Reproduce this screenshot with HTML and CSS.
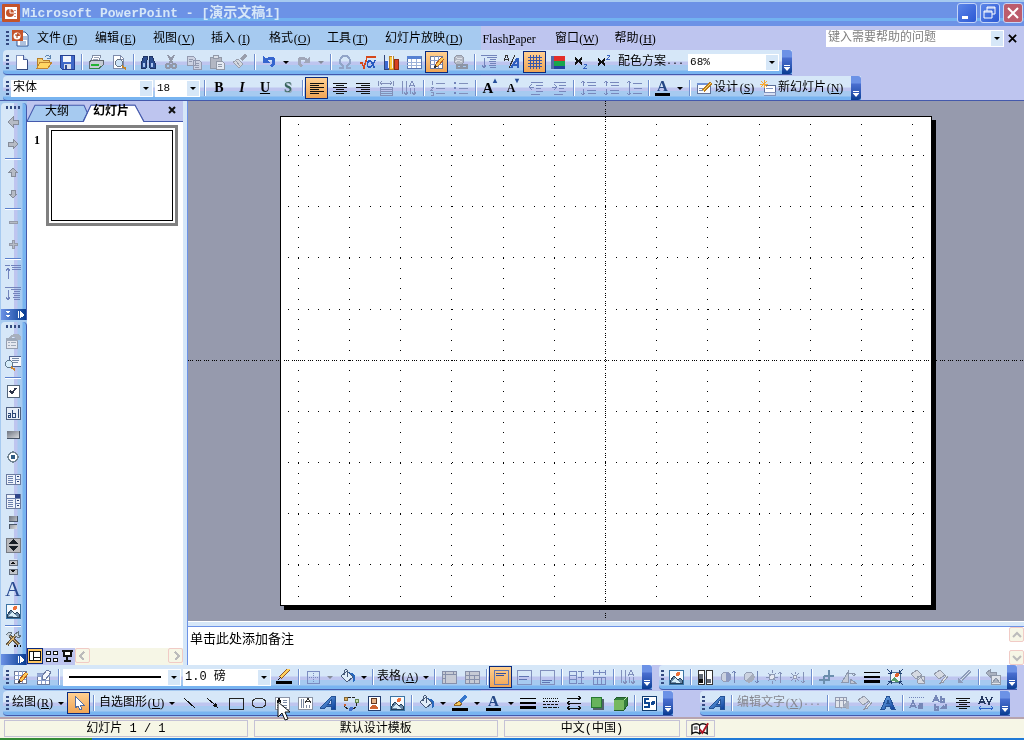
FILE: index.html
```html
<!DOCTYPE html>
<html lang="zh-CN">
<head>
<meta charset="utf-8">
<title>Microsoft PowerPoint - [演示文稿1]</title>
<link rel="stylesheet" href="styles.css">
</head>
<body>
<svg class="sprite" aria-hidden="true">
<defs>
<linearGradient id="blueA" x1="0" y1="0" x2="1" y2="1"><stop offset="0" stop-color="#7ab4ee"/><stop offset="1" stop-color="#0b3f9c"/></linearGradient>
<linearGradient id="metal" x1="0" y1="0" x2="1" y2="1"><stop offset="0" stop-color="#6d7480"/><stop offset="1" stop-color="#d8dade"/></linearGradient>
</defs>
<symbol id="ppt" viewBox="0 0 18 18"><rect width="18" height="18" rx="1" fill="#c4532a"/><rect x="3" y="3" width="12" height="12" fill="#fff"/><circle cx="8" cy="9" r="4" fill="#c4532a"/><path d="M8 5v4h4" stroke="#fff" fill="none"/><path d="M13 6v1M13 9v1M13 12v1" stroke="#822"/></symbol>
<symbol id="pptdoc" viewBox="0 0 18 18"><path d="M6 3h8l3 3v11H6z" fill="#fff" stroke="#345896"/><path d="M12 8h4M12 10h4M9 13h6M9 15h6" stroke="#5c83bd"/><rect x="1" y="1" width="11" height="11" fill="#c4532a"/><circle cx="6" cy="7" r="3.500" fill="#fff"/><path d="M6 7V4a3 3 0 0 1 3 3z" fill="#c4532a"/><path d="M4 6h2v3" stroke="#943711" fill="none"/></symbol>
<symbol id="new" viewBox="0 0 16 16"><path d="M3 1h7l4 4v10H3z" fill="#fff" stroke="#7d91bd"/><path d="M10 1v4h4" fill="#bcd0ef" stroke="#4a5f9c"/><path d="M4 15h10V6" stroke="#344b80" fill="none"/></symbol>
<symbol id="open" viewBox="0 0 16 16"><path d="M1 14V4h5l1 2h6v3" fill="#f4cf6b" stroke="#b47d2b"/><path d="M1 14 4 8h12l-4 6z" fill="#ffd664" stroke="#c08532"/><path d="M9 3q3-3 5 0m0-2v3h-3" fill="none" stroke="#5c83b0"/></symbol>
<symbol id="save" viewBox="0 0 16 16"><path d="M1 1h14v14H3l-2-2z" fill="#4068c8" stroke="#263f91"/><path d="M4 2h8v6H4z" fill="#f2f5fc"/><path d="M5 10h7v5H5z" fill="#d9deea"/><path d="M6 11h2v4H6z" fill="#304b96"/></symbol>
<symbol id="print" viewBox="0 0 16 16"><path d="M5 1h8l-2 6H3z" fill="#fff" stroke="#7f8ba3"/><path d="M6 3h5M5 5h5" stroke="#9aa3b6"/><path d="m1 8 3-2h11v5l-3 3H1z" fill="#c6ccd5" stroke="#5e6772"/><path d="M3 11h8" stroke="#22b432" stroke-width="2"/><path d="M2 14h9l2-2" fill="none" stroke="#2c8b45"/></symbol>
<symbol id="preview" viewBox="0 0 16 16"><path d="M2 1h7l3 3v10H2z" fill="#fff" stroke="#7e8baa"/><path d="M9 1v4h3" fill="none" stroke="#7e8baa"/><circle cx="8" cy="9" r="3.500" fill="#cce3f8" stroke="#687585"/><path d="m11 12 4 3" stroke="#c58628" stroke-width="2"/></symbol>
<symbol id="find" viewBox="0 0 16 16"><path d="M4 2h3v4l-1 8H1V9zM9 2h3l3 7v5h-5L9 6z" fill="#2c4d91" stroke="#1d3365"/><path d="M3 9h2v4H3M11 9h2v4h-2M7 6h2v3H7z" fill="#a7c4f2"/></symbol>
<symbol id="cut" viewBox="0 0 16 16"><path d="m5 1 5 9M11 1 6 10" stroke="#9298a9" stroke-width="2"/><circle cx="5" cy="12" r="2" fill="none" stroke="#9298a9" stroke-width="2"/><circle cx="11" cy="12" r="2" fill="none" stroke="#9298a9" stroke-width="2"/></symbol>
<symbol id="copy" viewBox="0 0 16 16"><path d="M1 2h6l2 2v7H1zM7 6h6l2 2v7H7z" fill="#ccd2e2" stroke="#9299af"/><path d="M3 5h4M3 7h3M9 9h4M9 11h4M9 13h4" stroke="#9299af"/></symbol>
<symbol id="paste" viewBox="0 0 16 16"><path d="M1 3h11v11H1z" fill="#b3b7c3" stroke="#9299a8"/><path d="M4 1h5v3H4z" fill="#dce0e8" stroke="#9299a8"/><path d="M7 7h6l2 2v6H7z" fill="#e5eaf3" stroke="#9299a8"/><path d="M9 10h4M9 12h4" stroke="#9299a8"/></symbol>
<symbol id="brush" viewBox="0 0 16 16"><path d="m14 1-5 5" stroke="#999eac" stroke-width="3"/><path d="m6 5 5 5-4 4-6-6z" fill="#d4d8e0" stroke="#999eac"/><path d="m4 7 4 5" stroke="#999eac"/></symbol>
<symbol id="undo" viewBox="0 0 16 16"><path d="M5 6q7-4 8 1 0 3-3 6" fill="none" stroke="#3565cf" stroke-width="3"/><path d="M2 2v7h7z" fill="#3565cf"/></symbol>
<symbol id="redo" viewBox="0 0 16 16"><path d="M11 6Q4 2 3 7q0 3 3 6" fill="none" stroke="#a1a7b9" stroke-width="3"/><path d="M14 2v7H7z" fill="#a1a7b9"/></symbol>
<symbol id="omega" viewBox="0 0 16 16"><path d="M2 14h4v-2Q2 9 3 6q1-4 5-4t5 4q1 3-3 6v2h4" fill="none" stroke="#91a4c8" stroke-width="2"/></symbol>
<symbol id="root" viewBox="0 0 16 16"><path d="M0 9h2l2 5L7 3h9" fill="none" stroke="#d5471b" stroke-width="1.500"/><path d="M15 6q-3 8-6 7-3-1-1-5 2-3 4 1l2 4h1" fill="none" stroke="#2959bf" stroke-width="1.500"/></symbol>
<symbol id="chart" viewBox="0 0 16 16"><path d="M1 1v14h14" stroke="#33457b" fill="none"/><path d="M2 7h4v8H2z" fill="#3e69d2"/><path d="M6 2h4v13H6z" fill="#ffca3e" stroke="#b7832a"/><path d="M11 5h4v10h-4z" fill="#d94120" stroke="#8a2d18"/><path d="M3 6h2v8M7 1h2v13" fill="none" stroke="#eef"/></symbol>
<symbol id="table" viewBox="0 0 16 16"><path d="M1 2h14v12H1z" fill="#fff" stroke="#5875b2"/><path d="M1 2h14v3H1z" fill="#5681d2"/><path d="M5 5v9M10 5v9M1 8h14M1 11h14" stroke="#9db2d9"/></symbol>
<symbol id="tablepen" viewBox="0 0 16 16"><path d="M1 2h12v12H1z" fill="#fff" stroke="#6b7899"/><path d="M5 2v12M9 2v12M1 6h12M1 10h12" stroke="#8a9ecb"/><path d="m7 12 7-8" stroke="#b75e20" stroke-width="4"/><path d="m7 12 7-8" stroke="#ffca55" stroke-width="2"/><path d="m5 14 1-3 2 2z" fill="#333"/></symbol>
<symbol id="eraser" viewBox="0 0 16 16"><path d="M1 4h12v11H1z" fill="#fff" stroke="#6b7899"/><path d="M1 4h12v3H1M5 7v8M9 7v8M1 11h12" stroke="#8a9ecb" fill="#97abd6"/><path d="m6 7 5-6 4 2-5 7H6z" fill="#f4f7fc" stroke="#6b7ba3"/></symbol>
<symbol id="link" viewBox="0 0 16 16"><circle cx="7" cy="6" r="5" fill="#b3b9c5" stroke="#9499a6"/><path d="M4 3q3 3 6 1M3 8q3-3 7 0" stroke="#dce0e7" fill="none"/><path d="M5 11h4v3H5zM10 11h5v3h-5z" fill="none" stroke="#8d95a5" stroke-width="2"/></symbol>
<symbol id="expand" viewBox="0 0 16 16"><path d="M0 1h16M6 3h10M9 5h6M8 7h7M9 9h6M8 11h7M9 13h6M3 4v10M1 11l2 3 2-3" fill="none" stroke="#7284bb"/></symbol>
<symbol id="collapse" viewBox="0 0 16 16"><path d="M0 1h5M6 1h10M7 3h9M7 5h9M3 15V4M1 7l2-3 2 3" fill="none" stroke="#7183bd"/></symbol>
<symbol id="fmt" viewBox="0 0 16 16"><path d="M0 7 2 1h1l2 6M1 5h3M5 14 11 1" stroke="#333" fill="none"/><path d="m7 14 6-9h1v9M10 11h4" stroke="#2e5dbd" fill="none" stroke-width="2"/></symbol>
<symbol id="grid" viewBox="0 0 16 16"><path d="M3 1v14M6 1v14M9 1v14M12 1v14M1 3h14M1 6h14M1 9h14M1 12h14" stroke="#3656a9"/></symbol>
<symbol id="color" viewBox="0 0 16 16"><path d="M1 2h14v13H1z" fill="#23419f"/><path d="M2 2h13v5H2z" fill="#e32e29"/><path d="M2 7h13v5H2z" fill="#18a54c"/><path d="M1 2h3v13H1z" fill="#536aa7"/></symbol>
<symbol id="subx" viewBox="0 0 16 16"><path d="m2 4 7 6M9 4l-7 6" stroke="#111" stroke-width="2"/><path d="M11 10h2v2l-2 2h3" fill="none" stroke="#3863c0"/></symbol>
<symbol id="supx" viewBox="0 0 16 16"><path d="m2 5 7 6M9 5l-7 6" stroke="#111" stroke-width="2"/><path d="M11 1h2v2l-2 2h3" fill="none" stroke="#3863c0"/></symbol>
<symbol id="left" viewBox="0 0 16 16"><path d="M1 3h14M1 5h9M1 7h14M1 9h9M1 11h14M1 13h9" stroke="#111"/></symbol>
<symbol id="center" viewBox="0 0 16 16"><path d="M1 3h14M4 5h8M1 7h14M4 9h8M1 11h14M4 13h8" stroke="#111"/></symbol>
<symbol id="right" viewBox="0 0 16 16"><path d="M1 3h14M6 5h9M1 7h14M6 9h9M1 11h14M6 13h9" stroke="#111"/></symbol>
<symbol id="dist" viewBox="0 0 16 16"><path d="M0 1v5M15 1v5M2 3h12M4 1 2 3l2 2M12 1l2 2-2 2M2 7h12M2 9h12M2 11h12M2 13h12M2 7v8h12V7" stroke="#8290b8" fill="none"/></symbol>
<symbol id="vert" viewBox="0 0 16 16"><path d="M1 1v13M5 1v13M9 8v6M13 8v6M3 12l2 3 2-3M8 7l3-6 3 6M9 5h4M11 12l2 3 2-3" stroke="#8190bc" fill="none"/></symbol>
<symbol id="num" viewBox="0 0 16 16"><path d="M6 3h9M6 8h9M6 13h9M2 1v4M1 7h2v1L1 10h2M1 12h2v3H1" stroke="#8190bc" fill="none"/></symbol>
<symbol id="bul" viewBox="0 0 16 16"><path d="M6 3h9M6 8h9M6 13h9" stroke="#8190bc"/><path d="M1 2h2v2H1zM1 7h2v2H1zM1 12h2v2H1z" fill="#7385bb"/></symbol>
<symbol id="outdent" viewBox="0 0 16 16"><path d="M3 2h12M8 5h7M8 8h5M8 11h7M3 14h9M1 7h5M4 4 1 7l3 3" stroke="#7888bc" fill="none"/></symbol>
<symbol id="indent" viewBox="0 0 16 16"><path d="M3 2h12M8 5h7M8 8h5M8 11h7M3 14h9M1 7h5M3 4l3 3-3 3" stroke="#7888bc" fill="none"/></symbol>
<symbol id="space" viewBox="0 0 16 16"><path d="M7 2h9M8 5h8M7 10h9M8 13h8M3 1v5M1 3l2-2 2 2M3 9v6M1 13l2 2 2-2" stroke="#7888bc" fill="none"/></symbol>
<symbol id="space2" viewBox="0 0 16 16"><path d="M7 3h9M8 8h8M7 13h9M3 1v14M1 3l2-2 2 2M1 13l2 2 2-2" stroke="#7888bc" fill="none"/></symbol>
<symbol id="design" viewBox="0 0 16 16"><path d="M1 3h13v10H1z" fill="#f7faff" stroke="#62739a"/><path d="M1 3h13v2H1z" fill="#6f91d2"/><path d="M3 8h5M3 10h4" stroke="#7d8cad"/><path d="m7 11 8-8" stroke="#bb7a1d" stroke-width="3"/><path d="m7 11 8-8" stroke="#ffe06a"/></symbol>
<symbol id="newslide" viewBox="0 0 16 16"><path d="M4 5h11v10H4z" fill="#fff" stroke="#5c6e98"/><path d="M4 12h11v3H4M6 8h7" stroke="#8393bc" fill="#d5dff4"/><path d="M4 0v8M0 4h8M1 1l6 6M7 1 1 7" stroke="#f7a832"/></symbol>
<symbol id="al" viewBox="0 0 16 16"><path d="m3 8 5-5v3h5v4H8v3z" fill="#b6bbc5" stroke="#858c99"/></symbol>
<symbol id="ar" viewBox="0 0 16 16"><path d="M13 8 8 3v3H3v4h5v3z" fill="#b6bbc5" stroke="#858c99"/></symbol>
<symbol id="au" viewBox="0 0 16 16"><path d="m8 4-4 4h2v4h4V8h2z" fill="#b6bbc5" stroke="#858c99"/></symbol>
<symbol id="ad" viewBox="0 0 16 16"><path d="m8 12 4-4h-2V4H6v4H4z" fill="#b6bbc5" stroke="#858c99"/></symbol>
<symbol id="minus" viewBox="0 0 16 16"><path d="M4 7h8v2H4z" fill="#b6bbc5" stroke="#959ba9"/></symbol>
<symbol id="plus" viewBox="0 0 16 16"><path d="M7 4h2v3h3v2H9v3H7V9H4V7h3z" fill="#b6bbc5" stroke="#959ba9"/></symbol>
<symbol id="prop" viewBox="0 0 16 16"><path d="M1 5h11v10H1z" fill="#e5e8ef" stroke="#959eaf"/><path d="M1 5h11v2H1zM3 9h2M6 9h5M3 12h2M6 12h5" fill="#9faaba" stroke="#9faaba"/><path d="M4 5q3-5 9-4l3 3v3h-3L9 4z" fill="#a8b0bd"/></symbol>
<symbol id="code" viewBox="0 0 16 16"><path d="M4 1h12v10H4z" fill="#f4f7fd" stroke="#506491"/><path d="M7 3h7M7 5h7M8 7h5" stroke="#7589a6"/><circle cx="4" cy="9" r="3.500" fill="#d6edfa" stroke="#5f788d"/><path d="m6 12 4 3" stroke="#cb8530" stroke-width="2"/></symbol>
<symbol id="check" viewBox="0 0 16 16"><path d="M2 2h12v12H2z" fill="#fff" stroke="#54657a"/><path d="m5 8 2 2 4-5" fill="none" stroke="#2c3247" stroke-width="2"/></symbol>
<symbol id="text" viewBox="0 0 16 16"><path d="M1 2h14v12H1z" fill="#e8eff8" stroke="#506180"/><path d="M3 8h2v4H3v-2h2M7 5v7h3V8H7M13 4v9" fill="none" stroke="#2e4978"/></symbol>
<symbol id="cmd" viewBox="0 0 16 16"><path d="M2 4h12v7H2z" fill="url(#metal)"/><path d="M2 11h12V4" fill="none" stroke="#465366"/></symbol>
<symbol id="radio" viewBox="0 0 16 16"><circle cx="8" cy="8" r="5" fill="#fff" stroke="#718493" stroke-width="1.500"/><circle cx="8" cy="8" r="2.500" fill="#315b82"/></symbol>
<symbol id="listbox" viewBox="0 0 16 16"><path d="M1 3h14v10H1z" fill="#eef3fb" stroke="#6b7ba0"/><path d="M10 3v10M10 8h5M3 5h5M3 7h5M3 9h5M3 11h5" stroke="#6c81ad"/><path d="m11 6 2-2 1 2zM11 10h3l-1 2z" fill="#263d74"/></symbol>
<symbol id="combo" viewBox="0 0 16 16"><path d="M1 1h14v14H1z" fill="#eef3fb" stroke="#6b7ba0"/><path d="M10 1h5v4h-5z" fill="#2f4587"/><path d="M1 5h14M10 5v10M10 10h5M3 7h5M3 9h5M3 11h5M3 13h5" stroke="#6c81ad"/><path d="m11 8 2-2 1 2zM11 12h3l-1 2z" fill="#263d74"/></symbol>
<symbol id="toggle" viewBox="0 0 16 16"><path d="M4 1h8v5H4zM4 9h8v5H4z" fill="url(#metal)"/><path d="M12 1v5H4M4 14V9h8" fill="none" stroke="#485668"/></symbol>
<symbol id="spin" viewBox="0 0 16 16"><path d="M1 1h14v14H1z" fill="#b9b9bc" stroke="#777b84"/><path d="M3 7h10L8 2zM3 9h10l-5 5z" fill="#161d26"/></symbol>
<symbol id="scroll" viewBox="0 0 16 16"><path d="M4 0h8v16H4z" fill="#dce8f5"/><path d="M4 1h8v5H4zM4 10h8v5H4z" fill="#c1c4ca" stroke="#657080"/><path d="m6 5 2-3 2 3zM6 11h4l-2 3z" fill="#111"/></symbol>
<symbol id="image" viewBox="0 0 16 16"><path d="M1 1h14v14H1z" fill="#f6fbff" stroke="#3b74a4"/><circle cx="10" cy="5" r="2" fill="#ed7039"/><path d="m2 12 4-5 4 4 2-2 2 2v3H2z" fill="#6b8ba8" stroke="#243e59"/><path d="m3 13 4-4 5 5z" fill="#d6ecf7"/></symbol>
<symbol id="tools" viewBox="0 0 16 16"><path d="m2 14 9-10M5 5l9 9" stroke="#615746" stroke-width="3"/><path d="m2 14 9-10M5 5l9 9" stroke="#e2b670"/><path d="M1 4q3-4 6-2L4 6M10 3l3-2v3h3l-2 3-4-2" fill="#c8d0d8" stroke="#60707c"/><path d="M9 15h2M12 15h1M15 15h1" stroke="#111" stroke-width="2"/></symbol>
<symbol id="ink" viewBox="0 0 16 16"><path d="m4 9 9-9" stroke="#925829" stroke-width="4"/><path d="m4 9 9-9" stroke="#ffd05c" stroke-width="2"/><path d="m2 11 3-2-1-1z" fill="#222"/><path d="M0 12h16v3H0z" fill="#000"/></symbol>
<symbol id="border" viewBox="0 0 16 16"><path d="M2 2h12v12H2z" fill="none" stroke="#7b8cc0"/><path d="M8 2v12M2 8h12" stroke="#7b8cc0" stroke-dasharray="1 1"/></symbol>
<symbol id="bucket" viewBox="0 0 16 16"><path d="m2 7 6-5 6 6-6 5z" fill="#e0edf9" stroke="#485c7b"/><path d="M8 8V1q0-2-3 1v4" fill="none" stroke="#475a79"/><path d="m9 3 5 4v6l2-2V7l-3-3z" fill="#2867bd"/></symbol>
<symbol id="merge" viewBox="0 0 16 16"><path d="M1 2h14v12H1zM1 5h14M4 2v12M1 9h3M12 2v3" fill="#c7cbd5" stroke="#8790aa"/></symbol>
<symbol id="split" viewBox="0 0 16 16"><path d="M1 2h14v12H1zM1 6h14M1 10h14M5 2v12M10 6v8" fill="#c7cbd5" stroke="#8790aa"/></symbol>
<symbol id="vt" viewBox="0 0 16 16"><path d="M1 1h14v14H1z" fill="none" stroke="#6278b5"/><path d="M3 4h10M3 6h8" stroke="#354f9e"/></symbol>
<symbol id="vm" viewBox="0 0 16 16"><path d="M1 1h14v14H1z" fill="none" stroke="#8290bd"/><path d="M3 7h10M3 10h8" stroke="#6075b3"/></symbol>
<symbol id="vb" viewBox="0 0 16 16"><path d="M1 1h14v14H1z" fill="none" stroke="#8290bd"/><path d="M3 11h10M3 13h8" stroke="#6075b3"/></symbol>
<symbol id="rows" viewBox="0 0 16 16"><path d="M1 2h7v12H1zM1 6h7M1 10h7M10 2h6M10 8h6M10 14h6M13 2v12" fill="none" stroke="#7789be"/></symbol>
<symbol id="cols" viewBox="0 0 16 16"><path d="M2 8h12v7H2zM6 8v7M10 8v7M2 1v5M14 1v5M2 3h12M8 1v5" fill="none" stroke="#7789be"/></symbol>
<symbol id="shade" viewBox="0 0 16 16"><path d="M1 1h6v14H1zM9 1h6v14H9z" fill="#fff" stroke="#333"/><path d="M2 5h4v5H2zM10 10h4v4h-4z" fill="#606773"/><path d="M2 10h4v4H2z" fill="#111"/></symbol>
<symbol id="contrastup" viewBox="0 0 16 16"><circle cx="6" cy="8" r="5" fill="#cbd2e0" stroke="#949eb5"/><path d="M6 3a5 5 0 0 1 0 10z" fill="#8c9ac2"/><path d="M14 14V2M12 4l2-2 2 2" fill="none" stroke="#7184b6"/></symbol>
<symbol id="contrastdown" viewBox="0 0 16 16"><circle cx="6" cy="8" r="5" fill="#cbd2e0" stroke="#949eb5"/><path d="m2 12 8-8a5 5 0 0 1-8 8z" fill="#a6adbc"/><path d="M14 2v12M12 12l2 2 2-2" fill="none" stroke="#7184b6"/></symbol>
<symbol id="sunup" viewBox="0 0 16 16"><circle cx="6" cy="8" r="2.500" fill="#e5e9f3" stroke="#929db3"/><path d="M6 1v3M6 12v3M0 8h3M9 8h3M2 4l2 2M10 4 8 6M2 12l2-2M8 10l2 2M14 14V3M12 5l2-2 2 2" fill="none" stroke="#8492b8"/></symbol>
<symbol id="sundown" viewBox="0 0 16 16"><circle cx="6" cy="8" r="2" fill="#e5e9f3" stroke="#929db3"/><path d="M6 3v2M6 11v2M1 8h2M9 8h2M2 4l2 2M10 4 8 6M2 12l2-2M8 10l2 2M14 3v11M12 12l2 2 2-2" fill="none" stroke="#8492b8"/></symbol>
<symbol id="crop" viewBox="0 0 16 16"><path d="M6 7v8M1 11h10V1M11 7h5M6 7h5" fill="none" stroke="#6c8fae" stroke-width="1.500"/></symbol>
<symbol id="rotate" viewBox="0 0 16 16"><path d="M1 13h6V3zM9 10v4h6z" fill="#c4cad6" stroke="#8c98ae"/><path d="M8 4h5v3M11 5l2 2 2-2" fill="none" stroke="#8c98ae"/></symbol>
<symbol id="lines" viewBox="0 0 16 16"><path d="M0 3h16v1H0zM0 7h16v2H0zM0 11h16v3H0z" fill="#000"/></symbol>
<symbol id="compress" viewBox="0 0 16 16"><path d="M3 3h10v10H3z" fill="#eef6fb" stroke="#4c708f"/><circle cx="10" cy="6" r="2" fill="#df622a"/><path d="m3 12 4-4 6 5" fill="#5ca06d"/><path d="m0 0 4 4M16 0l-4 4M0 16l4-4M16 16l-4-4M4 1v3H1M12 1v3h3M4 15v-3H1M12 15v-3h3" stroke="#203e72" fill="none"/></symbol>
<symbol id="fillgray" viewBox="0 0 16 16"><path d="m1 5 6-4 5 5-6 4zM7 7h7v7H8z" fill="#d6dae2" stroke="#939bab"/><path d="m8 11 3-3 4 7" fill="none" stroke="#929aaa"/></symbol>
<symbol id="fillbrush" viewBox="0 0 16 16"><path d="m1 5 6-4 5 5-6 4z" fill="#d6dae2" stroke="#939bab"/><path d="m14 7-5 6" stroke="#939bab" stroke-width="3"/><path d="m14 7-5 6" stroke="#dfe3ea"/><path d="m6 15 2-3 2 2z" fill="#8d95a6"/></symbol>
<symbol id="wand" viewBox="0 0 16 16"><path d="m14 2-9 9" stroke="#8d9dba" stroke-width="3"/><path d="m14 2-9 9" stroke="#dbe4ef"/><path d="M2 9v5h5z" fill="#8c9cbb"/></symbol>
<symbol id="reset" viewBox="0 0 16 16"><path d="M6 6h9v9H6z" fill="#dfe3ea" stroke="#929baa"/><path d="m7 14 4-5 4 5M1 4l4-3v2h6v3H5v2z" fill="#aab2c0" stroke="#8b95a7"/></symbol>
<symbol id="pointer" viewBox="0 0 16 16"><path d="M4 1v12l3-2 2 4 2-1-2-4h4z" fill="#fff" stroke="#536da1"/></symbol>
<symbol id="line" viewBox="0 0 16 16"><path d="m2 3 11 10" stroke="#111"/></symbol>
<symbol id="arrow" viewBox="0 0 16 16"><path d="m2 3 8 7" stroke="#111"/><path d="m13 13-2-6-4 4z" fill="#111"/></symbol>
<symbol id="rect" viewBox="0 0 16 16"><path d="M1 3h14v11H1z" fill="none" stroke="#222"/></symbol>
<symbol id="oval" viewBox="0 0 16 16"><ellipse cx="8" cy="8" rx="7" ry="5" fill="none" stroke="#333"/></symbol>
<symbol id="textbox" viewBox="0 0 16 16"><path d="M1 2h14v12H1z" fill="#fff" stroke="#8a93a4"/><path d="m3 8 2-5 2 5M4 6h2" stroke="#111" fill="none"/><path d="M9 5h4M9 7h4M3 10h10M3 12h10" stroke="#7c89a1"/></symbol>
<symbol id="vtext" viewBox="0 0 16 16"><path d="M1 2h14v12H1z" fill="#fff" stroke="#8a93a4"/><path d="m8 8 3-5 3 5M9 6h4" stroke="#333" fill="none"/><path d="M4 4v9M6 4v9M9 10v3M12 10v3" stroke="#7c89a1"/></symbol>
<symbol id="wordart" viewBox="0 0 16 16"><path d="M0 13 12 1h3v13h-4v-3H7l-2 2zm8-4h3V5z" fill="url(#blueA)" stroke="#245295" fill-rule="evenodd"/></symbol>
<symbol id="wordart2" viewBox="0 0 16 16"><path d="M1 14 7 1h2l6 13h-4l-1-3H6l-1 3zm6-6h2L8 5z" fill="url(#blueA)" stroke="#245295" fill-rule="evenodd"/></symbol>
<symbol id="org" viewBox="0 0 16 16"><path d="M5 3q5-3 8 2M14 8q0 4-4 6M5 14q-4-2-4-6" stroke="#222" fill="none" stroke-dasharray="3 1"/><circle cx="3" cy="4" r="2" fill="#dcad5e" stroke="#826632"/><circle cx="14" cy="6" r="2" fill="#c9e1ab" stroke="#5f834c"/><circle cx="8" cy="14" r="2" fill="#456ec9"/><circle cx="2" cy="10" r="1.500" fill="#ca622e"/></symbol>
<symbol id="clip" viewBox="0 0 16 16"><path d="M2 1h12v14H2z" fill="#fff" stroke="#243e70"/><circle cx="8" cy="6" r="3" fill="#e7b48a" stroke="#603722"/><path d="M4 14q0-4 4-4 4 0 4 4z" fill="#cf6230"/></symbol>
<symbol id="pen" viewBox="0 0 16 16"><path d="m8 7 6-6" stroke="#3576cc" stroke-width="3"/><path d="m2 10 5-4 3 3q-3 3-8 1z" fill="#f5c858" stroke="#906528"/><path d="M0 13h16v3H0z" fill="#000"/></symbol>
<symbol id="dashes" viewBox="0 0 16 16"><path d="M0 3h16" stroke="#111" stroke-dasharray="1 1"/><path d="M0 6h16" stroke="#111" stroke-dasharray="2 1"/><path d="M0 9h16" stroke="#111" stroke-dasharray="3 1"/><path d="M0 12h16" stroke="#111" stroke-dasharray="4 1"/></symbol>
<symbol id="arrows" viewBox="0 0 16 16"><path d="M1 3h14M1 8h14M1 13h14M12 1l3 2-3 2M4 6 1 8l3 2M12 11l3 2-3 2M4 11l-3 2 3 2" stroke="#111" fill="none"/></symbol>
<symbol id="shadow" viewBox="0 0 16 16"><path d="M4 4h11v11H4z" fill="#50616b"/><path d="M2 2h10v10H2z" fill="#67b35b" stroke="#277a31"/></symbol>
<symbol id="cube" viewBox="0 0 16 16"><path d="m2 5 3-3h10v9l-3 4H2z" fill="#367f3c" stroke="#215d2b"/><path d="M2 5h10v10H2z" fill="#76b85f"/><path d="m12 5 3-3" stroke="#c0e7ab"/></symbol>
<symbol id="share" viewBox="0 0 16 16"><path d="M1 1h14v14H1z" fill="#fff" stroke="#0f3a6d"/><path d="M8 4H4v4h4v4H3" fill="none" stroke="#104792" stroke-width="2"/><circle cx="12" cy="8" r="2" fill="#104792"/></symbol>
<symbol id="gallery" viewBox="0 0 16 16"><path d="M1 2h11v10H1zM1 5h11M5 2v10M9 2v10" fill="#e1e5ec" stroke="#939bb0"/><path d="m7 14 6-8h2v8h-3v-2H9z" fill="#a7b0c1"/></symbol>
<symbol id="aa" viewBox="0 0 16 16"><path d="M0 2h16" stroke="#7285b9" stroke-dasharray="1 1"/><path d="m1 13 3-7 3 7M2 11h4M10 9h3v4h-3v-2h3" stroke="#7688b8" fill="none" stroke-width="1.500"/></symbol>
<symbol id="ab" viewBox="0 0 16 16"><path d="m1 7 3-6 3 6M2 5h4M9 1v6h3V4H9M3 9v6h3v-3H3M14 9v4h-4l2-2" stroke="#7688b8" fill="none" stroke-width="1.500"/></symbol>
<symbol id="av" viewBox="0 0 16 16"><path d="m1 9 3-7 3 7M2 7h4M8 2l3 7 3-7" fill="none" stroke="#243760" stroke-width="1.500"/><path d="M1 13h14M3 11l-2 2 2 2M13 11l2 2-2 2" fill="none" stroke="#2a60c8"/></symbol>
</svg>

<div class="app">
<header class="title"><svg class="logo"><use href="#ppt"/></svg><h1>Microsoft PowerPoint - [<span>演示文稿</span>1]</h1>
<div class="window-buttons"><button aria-label="最小化"><svg viewBox="0 0 16 16"><path d="M3 11h6v3H3z" fill="#fff"/></svg></button><button aria-label="还原"><svg viewBox="0 0 16 16"><path d="M5 6V2h8v7h-3M5 3h8M2 6h8v7H2zM2 7h8" fill="none" stroke="#fff"/></svg></button><button class="close" aria-label="关闭"><svg viewBox="0 0 16 16"><path d="m3 3 10 10M13 3 3 13" stroke="#fff" stroke-width="2"/></svg></button></div></header>

<nav class="menu"><i class="grip"></i><svg class="logo"><use href="#pptdoc"/></svg>
<div class="menu-items"><button>文件<span class="m">(<u>F</u>)</span></button><button>编辑<span class="m">(<u>E</u>)</span></button><button>视图<span class="m">(<u>V</u>)</span></button><button>插入<span class="m">(<u>I</u>)</span></button><button>格式<span class="m">(<u>O</u>)</span></button><button>工具<span class="m">(<u>T</u>)</span></button><button>幻灯片放映<span class="m">(<u>D</u>)</span></button><button><span class="m flash">Flash<u>P</u>aper</span></button><button>窗口<span class="m">(<u>W</u>)</span></button><button>帮助<span class="m">(<u>H</u>)</span></button></div>
<div class="combo help"><input aria-label="帮助问题" placeholder="键入需要帮助的问题"><i class="drop"></i></div><button class="menu-close" aria-label="关闭窗口"><svg viewBox="0 0 10 10"><path d="m1 1 8 8M9 1 1 9" stroke="#000" stroke-width="2"/></svg></button></nav>

<div class="bar-row"><div class="bar" role="toolbar" aria-label="常用"><i class="grip"></i>
<button aria-label="新建"><svg><use href="#new"/></svg></button><button aria-label="打开"><svg><use href="#open"/></svg></button><button aria-label="保存"><svg><use href="#save"/></svg></button><i class="sep"></i>
<button aria-label="打印"><svg><use href="#print"/></svg></button><button aria-label="打印预览"><svg><use href="#preview"/></svg></button><i class="sep"></i>
<button aria-label="查找"><svg><use href="#find"/></svg></button><button aria-label="剪切"><svg><use href="#cut"/></svg></button><button aria-label="复制"><svg><use href="#copy"/></svg></button><button aria-label="粘贴"><svg><use href="#paste"/></svg></button><button aria-label="格式刷"><svg><use href="#brush"/></svg></button><i class="sep"></i>
<button aria-label="撤消"><svg><use href="#undo"/></svg></button><button class="dd" aria-label="撤消列表"></button><button aria-label="恢复"><svg><use href="#redo"/></svg></button><button class="dd off" aria-label="恢复列表"></button><i class="sep"></i>
<button aria-label="符号"><svg><use href="#omega"/></svg></button><button aria-label="公式"><svg><use href="#root"/></svg></button><button aria-label="图表"><svg><use href="#chart"/></svg></button><button aria-label="插入表格"><svg><use href="#table"/></svg></button><button class="on" aria-label="表格和边框"><svg><use href="#tablepen"/></svg></button><button aria-label="超链接"><svg><use href="#link"/></svg></button><i class="sep"></i>
<button aria-label="全部展开"><svg><use href="#expand"/></svg></button><button aria-label="显示格式"><svg><use href="#fmt"/></svg></button><button class="on" aria-label="网格"><svg><use href="#grid"/></svg></button><button aria-label="颜色"><svg><use href="#color"/></svg></button><button aria-label="下标"><svg><use href="#subx"/></svg></button><button aria-label="上标"><svg><use href="#supx"/></svg></button>
<button class="label scheme">配色方案<span class="dots">...</span></button>
<div class="combo zoom"><select aria-label="显示比例"><option>68%</option></select><i class="drop"></i></div><button class="cap" aria-label="工具栏选项"></button></div></div>

<div class="bar-row"><div class="bar" role="toolbar" aria-label="格式"><i class="grip"></i>
<div class="combo font"><select aria-label="字体"><option>宋体</option></select><i class="drop"></i></div><div class="combo size"><select aria-label="字号"><option>18</option></select><i class="drop"></i></div><i class="sep"></i>
<button class="glyph">B</button><button class="glyph italic">I</button><button class="glyph under">U</button><button class="glyph shade">S</button><i class="sep"></i>
<button class="on" aria-label="左对齐"><svg><use href="#left"/></svg></button><button aria-label="居中"><svg><use href="#center"/></svg></button><button aria-label="右对齐"><svg><use href="#right"/></svg></button><button aria-label="分散对齐"><svg><use href="#dist"/></svg></button><button aria-label="文字方向"><svg><use href="#vert"/></svg></button><i class="sep"></i>
<button aria-label="编号"><svg><use href="#num"/></svg></button><button aria-label="项目符号"><svg><use href="#bul"/></svg></button><i class="sep"></i>
<button class="glyph grow" aria-label="增大字号">A<sup>▴</sup></button><button class="glyph shrink" aria-label="减小字号">A<sup>▾</sup></button><button aria-label="减少缩进"><svg><use href="#outdent"/></svg></button><button aria-label="增加缩进"><svg><use href="#indent"/></svg></button><i class="sep"></i>
<button aria-label="增大段落间距"><svg><use href="#space"/></svg></button><button aria-label="减小段落间距"><svg><use href="#space"/></svg></button><button aria-label="行距"><svg><use href="#space2"/></svg></button><i class="sep"></i>
<button class="glyph ink" aria-label="字体颜色">A</button><button class="dd" aria-label="字体颜色列表"></button><i class="sep"></i>
<button class="label design"><svg><use href="#design"/></svg>设计<span class="m">(<u>S</u>)</span></button><button class="label newslide"><svg><use href="#newslide"/></svg>新幻灯片<span class="m">(<u>N</u>)</span></button><button class="cap" aria-label="工具栏选项"></button></div></div>

<main class="main">
<div class="rails">
<div class="rail" role="toolbar" aria-label="大纲工具"><i class="grip"></i><button aria-label="升级"><svg><use href="#al"/></svg></button><button aria-label="降级"><svg><use href="#ar"/></svg></button><i class="sep"></i><button aria-label="上移"><svg><use href="#au"/></svg></button><button aria-label="下移"><svg><use href="#ad"/></svg></button><i class="sep"></i><button aria-label="折叠"><svg><use href="#minus"/></svg></button><button aria-label="展开"><svg><use href="#plus"/></svg></button><i class="sep"></i><button aria-label="全部折叠"><svg><use href="#collapse"/></svg></button><button aria-label="全部展开"><svg><use href="#expand"/></svg></button><button class="rail-cap" aria-label="工具栏选项"><svg viewBox="0 0 25 11"><path d="M5 2h4L7 4zM5 6h4L7 8zM17 2v7M19 2v7l4-3z" fill="#fff" stroke="#fff"/></svg></button></div>
<div class="rail grow-rail" role="toolbar" aria-label="控件工具箱"><i class="grip"></i><button aria-label="属性"><svg><use href="#prop"/></svg></button><button aria-label="查看代码"><svg><use href="#code"/></svg></button><i class="sep"></i><button aria-label="复选框"><svg><use href="#check"/></svg></button><button aria-label="文本框"><svg><use href="#text"/></svg></button><button aria-label="命令按钮"><svg><use href="#cmd"/></svg></button><button aria-label="选项按钮"><svg><use href="#radio"/></svg></button><button aria-label="列表框"><svg><use href="#listbox"/></svg></button><button aria-label="组合框"><svg><use href="#combo"/></svg></button><button aria-label="切换按钮"><svg><use href="#toggle"/></svg></button><button aria-label="数值调节钮"><svg><use href="#spin"/></svg></button><button aria-label="滚动条"><svg><use href="#scroll"/></svg></button><button class="big-a" aria-label="标签">A</button><button aria-label="图像"><svg><use href="#image"/></svg></button><i class="sep"></i><button aria-label="其他控件"><svg><use href="#tools"/></svg></button><button class="rail-cap" aria-label="工具栏选项"><svg viewBox="0 0 25 11"><path d="M17 2v7M19 2v7l4-3z" fill="#fff" stroke="#fff"/></svg></button></div>
</div>

<aside class="panel">
<div class="tabs"><svg class="tab-shape" viewBox="0 0 156 20" preserveAspectRatio="none"><path d="M0 19.500 8 4h49l7 15" fill="#a6caf0" stroke="#4459ac"/><path d="M0 19.500h56L64 4h44l9 15.500h39" fill="none" stroke="#4459ac"/><path d="m57 20 7-16h44l9 16z" fill="#fff"/><path d="m56 20 8-16h44l9 16" fill="none" stroke="#4459ac"/></svg><button>大纲</button><button class="current">幻灯片</button><button class="tab-close" aria-label="关闭窗格"><svg viewBox="0 0 8 8"><path d="m1 1 6 6M7 1 1 7" stroke="#111" stroke-width="2"/></svg></button></div>
<div class="thumbs"><b>1</b><button class="thumb" aria-label="幻灯片 1"><span></span></button></div>
<div class="views"><button class="on" aria-label="普通视图"><svg viewBox="0 0 14 14"><path d="M1 2h11v9H1zM5 2v9M5 8h7" fill="#fff" stroke="#111"/></svg></button><button aria-label="浏览视图"><svg viewBox="0 0 14 14"><path d="M2 2h4v3H2zM9 2h4v3H9zM2 9h4v3H2zM9 9h4v3H9z" fill="#fff" stroke="#111"/></svg></button><button aria-label="放映"><svg viewBox="0 0 14 14"><path d="M2 2h11M4 3v4h7V3M7 7v4M4 12h7" fill="#fff" stroke="#111" stroke-width="2"/></svg></button><div class="hscroll"><button aria-label="向左滚动"><svg viewBox="0 0 14 14"><path d="M8 3 4 7l4 4" fill="none" stroke="#bbb" stroke-width="2"/></svg></button><button aria-label="向右滚动"><svg viewBox="0 0 14 14"><path d="m6 3 4 4-4 4" fill="none" stroke="#bbb" stroke-width="2"/></svg></button></div></div>
</aside>
<div class="vsplit"></div>
<section class="work">
<div class="canvas"><div class="slide"><svg viewBox="0 0 652 490" aria-label="空白幻灯片"><g fill="none" stroke="#000" shape-rendering="crispEdges" stroke-dasharray="1 9 1 9 1 9 1 10"><path d="M8 39.500h636M8 90.500h636M8 141.500h636M8 193.500h636M8 295.500h636M8 346.500h636M8 397.500h636M8 448.500h636"/><path stroke-dashoffset="30" d="M18.500 8v474M69.500 8v474M120.500 8v474M171.500 8v474M223.500 8v474M274.500 8v474M376.500 8v474M427.500 8v474M479.500 8v474M530.500 8v474M581.500 8v474M632.500 8v474"/></g></svg></div><i class="guide-v"></i><i class="guide-h"></i></div>
<div class="hsplit"></div>
<div class="notes"><textarea aria-label="备注">单击此处添加备注</textarea><div class="vscroll"><button aria-label="向上滚动"><svg viewBox="0 0 14 14"><path d="m3 9 4-4 4 4" fill="none" stroke="#bbb" stroke-width="2"/></svg></button><button aria-label="向下滚动"><svg viewBox="0 0 14 14"><path d="m3 5 4 4 4-4" fill="none" stroke="#bbb" stroke-width="2"/></svg></button></div></div>
</section>
</main>

<div class="bar-row lower"><div class="bar" role="toolbar" aria-label="表格和边框"><i class="grip"></i>
<button aria-label="绘制表格"><svg><use href="#tablepen"/></svg></button><button aria-label="擦除"><svg><use href="#eraser"/></svg></button><i class="sep"></i>
<div class="combo linestyle"><select aria-label="线型"><option></option></select><i class="drop"></i></div><div class="combo weight"><select aria-label="线宽"><option>1.0 磅</option></select><i class="drop"></i></div><button aria-label="边框颜色"><svg><use href="#ink"/></svg></button><i class="sep"></i>
<button aria-label="边框"><svg><use href="#border"/></svg></button><button class="dd off" aria-label="边框列表"></button><button aria-label="填充"><svg><use href="#bucket"/></svg></button><button class="dd" aria-label="填充列表"></button><i class="sep"></i>
<button class="label table-menu">表格<span class="m">(<u>A</u>)</span><i class="tri"></i></button><i class="sep"></i>
<button aria-label="合并单元格"><svg><use href="#merge"/></svg></button><button aria-label="拆分单元格"><svg><use href="#split"/></svg></button><i class="sep"></i><button class="on" aria-label="顶端对齐"><svg><use href="#vt"/></svg></button><button aria-label="垂直居中"><svg><use href="#vm"/></svg></button><button aria-label="底端对齐"><svg><use href="#vb"/></svg></button><i class="sep"></i><button aria-label="平均分布行"><svg><use href="#rows"/></svg></button><button aria-label="平均分布列"><svg><use href="#cols"/></svg></button><i class="sep"></i><button aria-label="文字方向"><svg><use href="#vert"/></svg></button><button class="cap" aria-label="工具栏选项"></button></div>
<div class="bar picture" role="toolbar" aria-label="图片"><i class="grip"></i><button aria-label="插入图片"><svg><use href="#image"/></svg></button><i class="sep"></i><button aria-label="颜色"><svg><use href="#shade"/></svg></button><button aria-label="增加对比度"><svg><use href="#contrastup"/></svg></button><button aria-label="降低对比度"><svg><use href="#contrastdown"/></svg></button><button aria-label="增加亮度"><svg><use href="#sunup"/></svg></button><button aria-label="降低亮度"><svg><use href="#sundown"/></svg></button><i class="sep"></i><button aria-label="裁剪"><svg><use href="#crop"/></svg></button><button aria-label="旋转"><svg><use href="#rotate"/></svg></button><button aria-label="线型"><svg><use href="#lines"/></svg></button><button aria-label="压缩图片"><svg><use href="#compress"/></svg></button><button aria-label="重新着色"><svg><use href="#fillgray"/></svg></button><button aria-label="设置图片格式"><svg><use href="#fillbrush"/></svg></button><button aria-label="透明色"><svg><use href="#wand"/></svg></button><i class="sep"></i><button aria-label="重设图片"><svg><use href="#reset"/></svg></button><button class="cap" aria-label="工具栏选项"></button></div></div>

<div class="bar-row lower"><div class="bar draw" role="toolbar" aria-label="绘图"><i class="grip"></i>
<button class="label">绘图<span class="m">(<u>R</u>)</span><i class="tri"></i></button><button class="on" aria-label="选择对象"><svg><use href="#pointer"/></svg></button><i class="sep"></i><button class="label">自选图形<span class="m">(<u>U</u>)</span><i class="tri"></i></button>
<button aria-label="直线"><svg><use href="#line"/></svg></button><button aria-label="箭头"><svg><use href="#arrow"/></svg></button><button aria-label="矩形"><svg><use href="#rect"/></svg></button><button aria-label="椭圆"><svg><use href="#oval"/></svg></button><button class="pointed" aria-label="文本框"><svg><use href="#textbox"/></svg><svg class="cursor" viewBox="0 0 13 20"><path d="M1 1v15l4-4 3 7 3-1-3-7h5z" fill="#fff" stroke="#111"/></svg></button><button aria-label="竖排文本框"><svg><use href="#vtext"/></svg></button><button aria-label="艺术字"><svg><use href="#wordart"/></svg></button><button aria-label="组织结构图"><svg><use href="#org"/></svg></button><button aria-label="剪贴画"><svg><use href="#clip"/></svg></button><button aria-label="图片"><svg><use href="#image"/></svg></button><i class="sep"></i>
<button aria-label="填充颜色"><svg><use href="#bucket"/></svg></button><button class="dd" aria-label="填充颜色列表"></button><button aria-label="线条颜色"><svg><use href="#pen"/></svg></button><button class="dd" aria-label="线条颜色列表"></button><button class="glyph ink" aria-label="字体颜色">A</button><button class="dd" aria-label="字体颜色列表"></button>
<button aria-label="线型"><svg><use href="#lines"/></svg></button><button aria-label="虚线线型"><svg><use href="#dashes"/></svg></button><button aria-label="箭头样式"><svg><use href="#arrows"/></svg></button><button aria-label="阴影样式"><svg><use href="#shadow"/></svg></button><button aria-label="三维效果"><svg><use href="#cube"/></svg></button><i class="sep"></i><button aria-label="公式对象"><svg><use href="#share"/></svg></button><button class="cap" aria-label="工具栏选项"></button></div>
<div class="bar art" role="toolbar" aria-label="艺术字"><i class="grip"></i><button aria-label="插入艺术字"><svg><use href="#wordart"/></svg></button><i class="sep"></i><button class="label disabled" disabled>编辑文字<span class="m">(<u>X</u>)</span><span class="dots">...</span></button><i class="sep"></i><button aria-label="艺术字库"><svg><use href="#gallery"/></svg></button><button aria-label="艺术字格式"><svg><use href="#fillbrush"/></svg></button><button aria-label="艺术字形状"><svg><use href="#wordart2"/></svg></button><i class="sep"></i><button aria-label="字母高度"><svg><use href="#aa"/></svg></button><button aria-label="竖排文字"><svg><use href="#ab"/></svg></button><button aria-label="对齐"><svg><use href="#center"/></svg></button><button aria-label="字符间距"><svg><use href="#av"/></svg></button><button class="cap" aria-label="工具栏选项"></button></div></div>

<footer class="status"><div>幻灯片 1 / 1</div><div>默认设计模板</div><div class="lang">中文(中国)</div><div class="spell"><svg viewBox="0 0 20 14"><path d="M1 3q5-3 8 0 3-3 8 0v9q-5-3-8 0-4-3-8 0z" fill="#fff" stroke="#111" stroke-width="1.500"/><path d="M9 3v9M3 5h4M3 7h4" stroke="#111"/><path d="m9 7 3 4 6-10" fill="none" stroke="#b21625" stroke-width="2"/></svg></div></footer>
<div class="taskbar"></div>
</div>
</body>
</html>
```
FILE: styles.css
```css
* { box-sizing: border-box; }
body { margin: 0; }
body, button, input, select, textarea {
  font-family: "Liberation Mono", "Noto Sans CJK SC", monospace;
  font-size: 12px; line-height: 16px; color: #000;
}
button { padding: 0; border: 0; background: none; display: flex; align-items: center; justify-content: center; flex: none; white-space: nowrap; }
svg { display: block; flex: none; }
.sprite { position: absolute; width: 0; height: 0; }
.app { min-height: 100vh; display: flex; flex-direction: column; overflow: hidden; background: linear-gradient(90deg, #a6caf0 47%, #bec5ef 47%); }
.m { display: inline-block; min-width: 18px; text-align: center; font-size: 12px; font-family: "Liberation Serif", serif; }
.flash { min-width: 60px; }
.dots { font-size: 10px; }

.title { height: 26px; flex: none; display: flex; align-items: center; gap: 2px; padding: 0 1px 0 2px; background: linear-gradient(#a6caf0 2px, #6c92e6 2px, #6c92e6 18px, #72b2f0 18px, #72b2f0 21px, #6c92e6 21px); }
.logo { width: 18px; height: 18px; }
.title h1 { margin: 0; flex: 1; font-size: 13px; line-height: 20px; color: #d6e7f8; white-space: nowrap; }
.title h1 span { font-size: 14px; }
.window-buttons { display: flex; gap: 3px; }
.window-buttons button { width: 20px; height: 20px; border: 1px solid #c5d5f8; border-radius: 3px; background: linear-gradient(135deg, #5c86e8, #2c58d4); }
.window-buttons .close { background: #bc5c6c; }
.window-buttons svg { width: 16px; height: 16px; }

.menu { height: 24px; flex: none; display: flex; align-items: center; padding: 0 5px 0 6px; }
.menu-items { display: flex; gap: 16px; flex: 1; margin-left: 8px; padding-top: 2px; }
.menu .logo { margin-left: 2px; }
.menu-close { margin-left: 1px; width: 14px; }
.menu-close svg { width: 9px; height: 9px; }

.grip { flex: none; width: 3px; height: 15px; background: repeating-linear-gradient(#344a80 0 2px, transparent 2px 4px); }
.bar-row { display: flex; flex: none; height: 26px; padding-left: 3px; }
.bar { height: 25px; display: flex; align-items: center; flex: none; padding-left: 3px; border-radius: 4px 0 0 4px; border-bottom: 1px solid #4459ac; background: linear-gradient(#d6e7f8 11px, #bec5ef 12px, #bec5ef 15px, #a6caf0 15px, #a6caf0 20px, #78b4f0 21px); }
.bar button { width: 23px; height: 22px; padding-left: 1px; }
.bar svg, .rail svg { width: 16px; height: 16px; shape-rendering: crispEdges; }
.bar .on { background: linear-gradient(#ffd091, #f0a555); border: 1px solid #0a2a7c; }
.sep { flex: none; width: 6px; height: 16px; background: linear-gradient(90deg, transparent 3px, #6f8fce 3px, #6f8fce 4px, #fff 4px, #fff 5px, transparent 5px); }
.bar .dd { width: 12px; padding: 0; }
.lower .bar .dd { width: 11px; }
.dd::before, .tri, .drop::before { content: ""; border: 3px solid transparent; border-top-color: #000; border-bottom: 0; }
.dd.off::before { border-top-color: #858b9a; }
.tri { margin-left: 4px; }
.bar .label { width: auto; padding: 0 3px; }
.bar .table-menu { padding: 0 2px; }
.bar .scheme { padding: 0 4px 0 3px; }
.bar .design { padding: 0 2px 0 4px; gap: 2px; }
.bar .newslide { padding: 0 4px 0 2px; gap: 2px; }
.design .m, .newslide .m { margin-left: -2px; }
.bar .cap { width: 10px; height: 24px; margin-left: 3px; align-self: flex-start; align-items: flex-end; padding: 0 0 3px; background: linear-gradient(#6c92e6 7px, #4a6fd0 8px, #2f59b6 16px, #083c91); border-radius: 0 3px 3px 0; }
.cap::before { content: ""; width: 6px; height: 6px; background: linear-gradient(#fff 1px, transparent 1px 2px, #fff 2px); clip-path: polygon(0 0, 100% 0, 100% 40%, 50% 100%, 0 40%); }

.combo { display: flex; align-items: center; height: 17px; background: #fff; flex: none; }
.combo select, .combo input { appearance: none; border: 0; padding: 0 0 0 2px; margin: 0; height: 17px; min-width: 0; flex: 1; background: transparent; outline: 0; }
.drop { width: 12px; height: 15px; margin-right: 1px; background: #d6e7f8; display: flex; align-items: center; justify-content: center; flex: none; pointer-events: none; }
.help { width: 178px; }
.help input::placeholder { color: #808080; opacity: 1; }
.zoom { width: 91px; }
.zoom select, .size select { font-size: 11px; }
.font { width: 142px; margin-left: 2px; }
.size { width: 45px; margin: 0 1px 0 2px; }
.linestyle { width: 118px; margin-left: 2px; }
.linestyle select { background: linear-gradient(#000, #000) 6px 7px / 92px 2px no-repeat; }
.weight { width: 88px; margin: 0 1px 0 2px; }

.glyph { font: bold 14px/16px "Liberation Serif", serif; }
.italic { font-style: italic; }
.under { text-decoration: underline; }
.shade { color: #38645c; text-shadow: 1px 1px #9ab; }
.glyph sup { font-size: 8px; line-height: 8px; color: #264d99; align-self: flex-start; }
.grow { font-size: 15px; }
.shrink { font-size: 12px; }
.ink { color: #254886; }
.bar .ink { height: 16px; width: 15px; margin: 0 4px; padding: 0; border-bottom: 3px solid #000; line-height: 13px; font-size: 15px; }

.main { flex: 1; min-height: 0; display: flex; margin-top: -2px; border-top: 1px solid #4459ac; }
.rails { width: 27px; flex: none; display: flex; flex-direction: column; gap: 2px; padding: 2px 0 0 1px; }
.rail { display: flex; flex-direction: column; align-items: center; padding: 3px 1px 0 0; border-radius: 4px 4px 0 0; border-right: 1px solid #4459ac; background: linear-gradient(90deg, #d6e7f8 13px, #bec5ef 13px, #bec5ef 16px, #a6caf0 17px, #a6caf0 21px, #78b4f0 22px); }
.grow-rail { flex: 1; }
.rail .grip { width: 15px; height: 3px; margin-bottom: 2px; background: repeating-linear-gradient(90deg, #344a80 0 2px, transparent 2px 4px); }
.rail button { width: 22px; height: 22px; }
.rail .sep { width: 16px; height: 6px; background: linear-gradient(transparent 3px, #5b80cc 3px, #5b80cc 4px, #fff 4px, #fff 5px, transparent 5px); }
.rail .rail-cap { width: 25px; height: 11px; margin-top: auto; background: linear-gradient(90deg, #6c92e6, #083c91); }
.rail .rail-cap svg { width: 25px; height: 11px; }
.rail:first-child .rail-cap { margin-top: 4px; }
.rail .big-a { font: 22px/22px "Liberation Serif", serif; color: #294a91; }

.panel { width: 156px; flex: none; display: flex; flex-direction: column; background: #fff; }
.tabs { height: 21px; display: flex; background: #bec5ef; position: relative; padding: 3px 7px 0 18px; }
.tabs button { position: relative; height: 16px; }
.tab-shape { position: absolute; inset: 0; width: 100%; height: 100%; }
.tabs .current { margin-left: 24px; font-weight: bold; }
.tabs .tab-close { margin: -2px 0 0 auto; }
.tab-close svg { width: 8px; height: 8px; }
.thumbs { flex: 1; display: flex; align-items: flex-start; gap: 5px; padding: 3px 5px 0 7px; }
.thumbs b { font: bold 12px/16px "Liberation Serif", serif; margin-top: 7px; width: 7px; }
.thumb { flex: 1; height: 101px; border: 3px solid #808080; padding: 2px; background: #fff; align-items: stretch; }
.thumb span { flex: 1; border: 1px solid #000; }
.views { display: flex; height: 17px; background: #bec5ef; }
.views > button { width: 16px; height: 16px; }
.views svg { width: 14px; height: 14px; shape-rendering: crispEdges; }
.views .on { background: #ffc865; border: 1px solid #0a2a7c; }
.hscroll { flex: 1; display: flex; justify-content: space-between; background: #f6f6e6; }
.hscroll button, .vscroll button { width: 15px; height: 15px; border: 1px solid #f1cbc6; border-radius: 2px; background: #f6f6e6; }
.vsplit { width: 5px; flex: none; background: #d6e7f8; border-right: 1px solid #6c92e6; }

.work { flex: 1; min-width: 0; display: flex; flex-direction: column; }
.canvas { flex: 1; min-height: 0; position: relative; display: flex; align-items: center; justify-content: center; background: #969aad; }
.slide { width: 78%; background: #fff; border: 1px solid #000; box-shadow: 4px 4px #000; }
.slide svg { width: calc(100% + 2px); margin: -1px; }
.guide-v { position: absolute; left: calc(50% - 1px); top: 0; bottom: 0; width: 1px; background: repeating-linear-gradient(#000 0 1px, #fff 1px 2px, #000 2px 3px, #fff 3px 4px, #000 4px 5px, #fff 5px 8px); mix-blend-mode: multiply; }
.guide-h { position: absolute; top: calc(50% - 1px); left: 0; right: 0; height: 1px; background: repeating-linear-gradient(90deg, #000 0 1px, #fff 1px 2px, #000 2px 3px, #fff 3px 4px, #000 4px 5px, #fff 5px 8px); mix-blend-mode: multiply; }
.hsplit { height: 6px; flex: none; background: #d6e7f8; border-top: 1px solid #fff; border-bottom: 1px solid #6c92e6; }
.notes { height: 38px; flex: none; display: flex; background: #fff; }
.notes textarea { flex: 1; min-width: 0; border: 0; padding: 5px 2px; resize: none; outline: 0; font-size: 13px; background: #fff; overflow: hidden; }
.vscroll { display: flex; flex-direction: column; justify-content: space-between; background: #fff; }
.vscroll svg, .hscroll svg { width: 14px; height: 14px; }

.picture { margin-left: 7px; }
.bar.picture, .bar.art { padding-left: 2px; }
.bar.art { margin-left: 27px; }
.disabled, .disabled .m { color: #85868e; }
.pointed { position: relative; }
.bar .cursor { position: absolute; left: 7px; top: 9px; width: 13px; height: 20px; z-index: 2; shape-rendering: auto; }

.status { height: 21px; flex: none; display: flex; gap: 6px; padding: 1px 4px; background: #f6f6e6; border-top: 2px solid #b7a3ae; }
.status div { border: 1px solid #c5c2d6; display: flex; align-items: center; justify-content: center; flex: 0 1 24%; white-space: pre; }
.status .lang { flex-basis: 17.4%; }
.status .spell { flex-basis: 29px; }
.spell svg { width: 19px; height: 14px; }
.taskbar { height: 2px; flex: none; background: linear-gradient(90deg, #348b37 9%, #1f79d6 9%); }
```
